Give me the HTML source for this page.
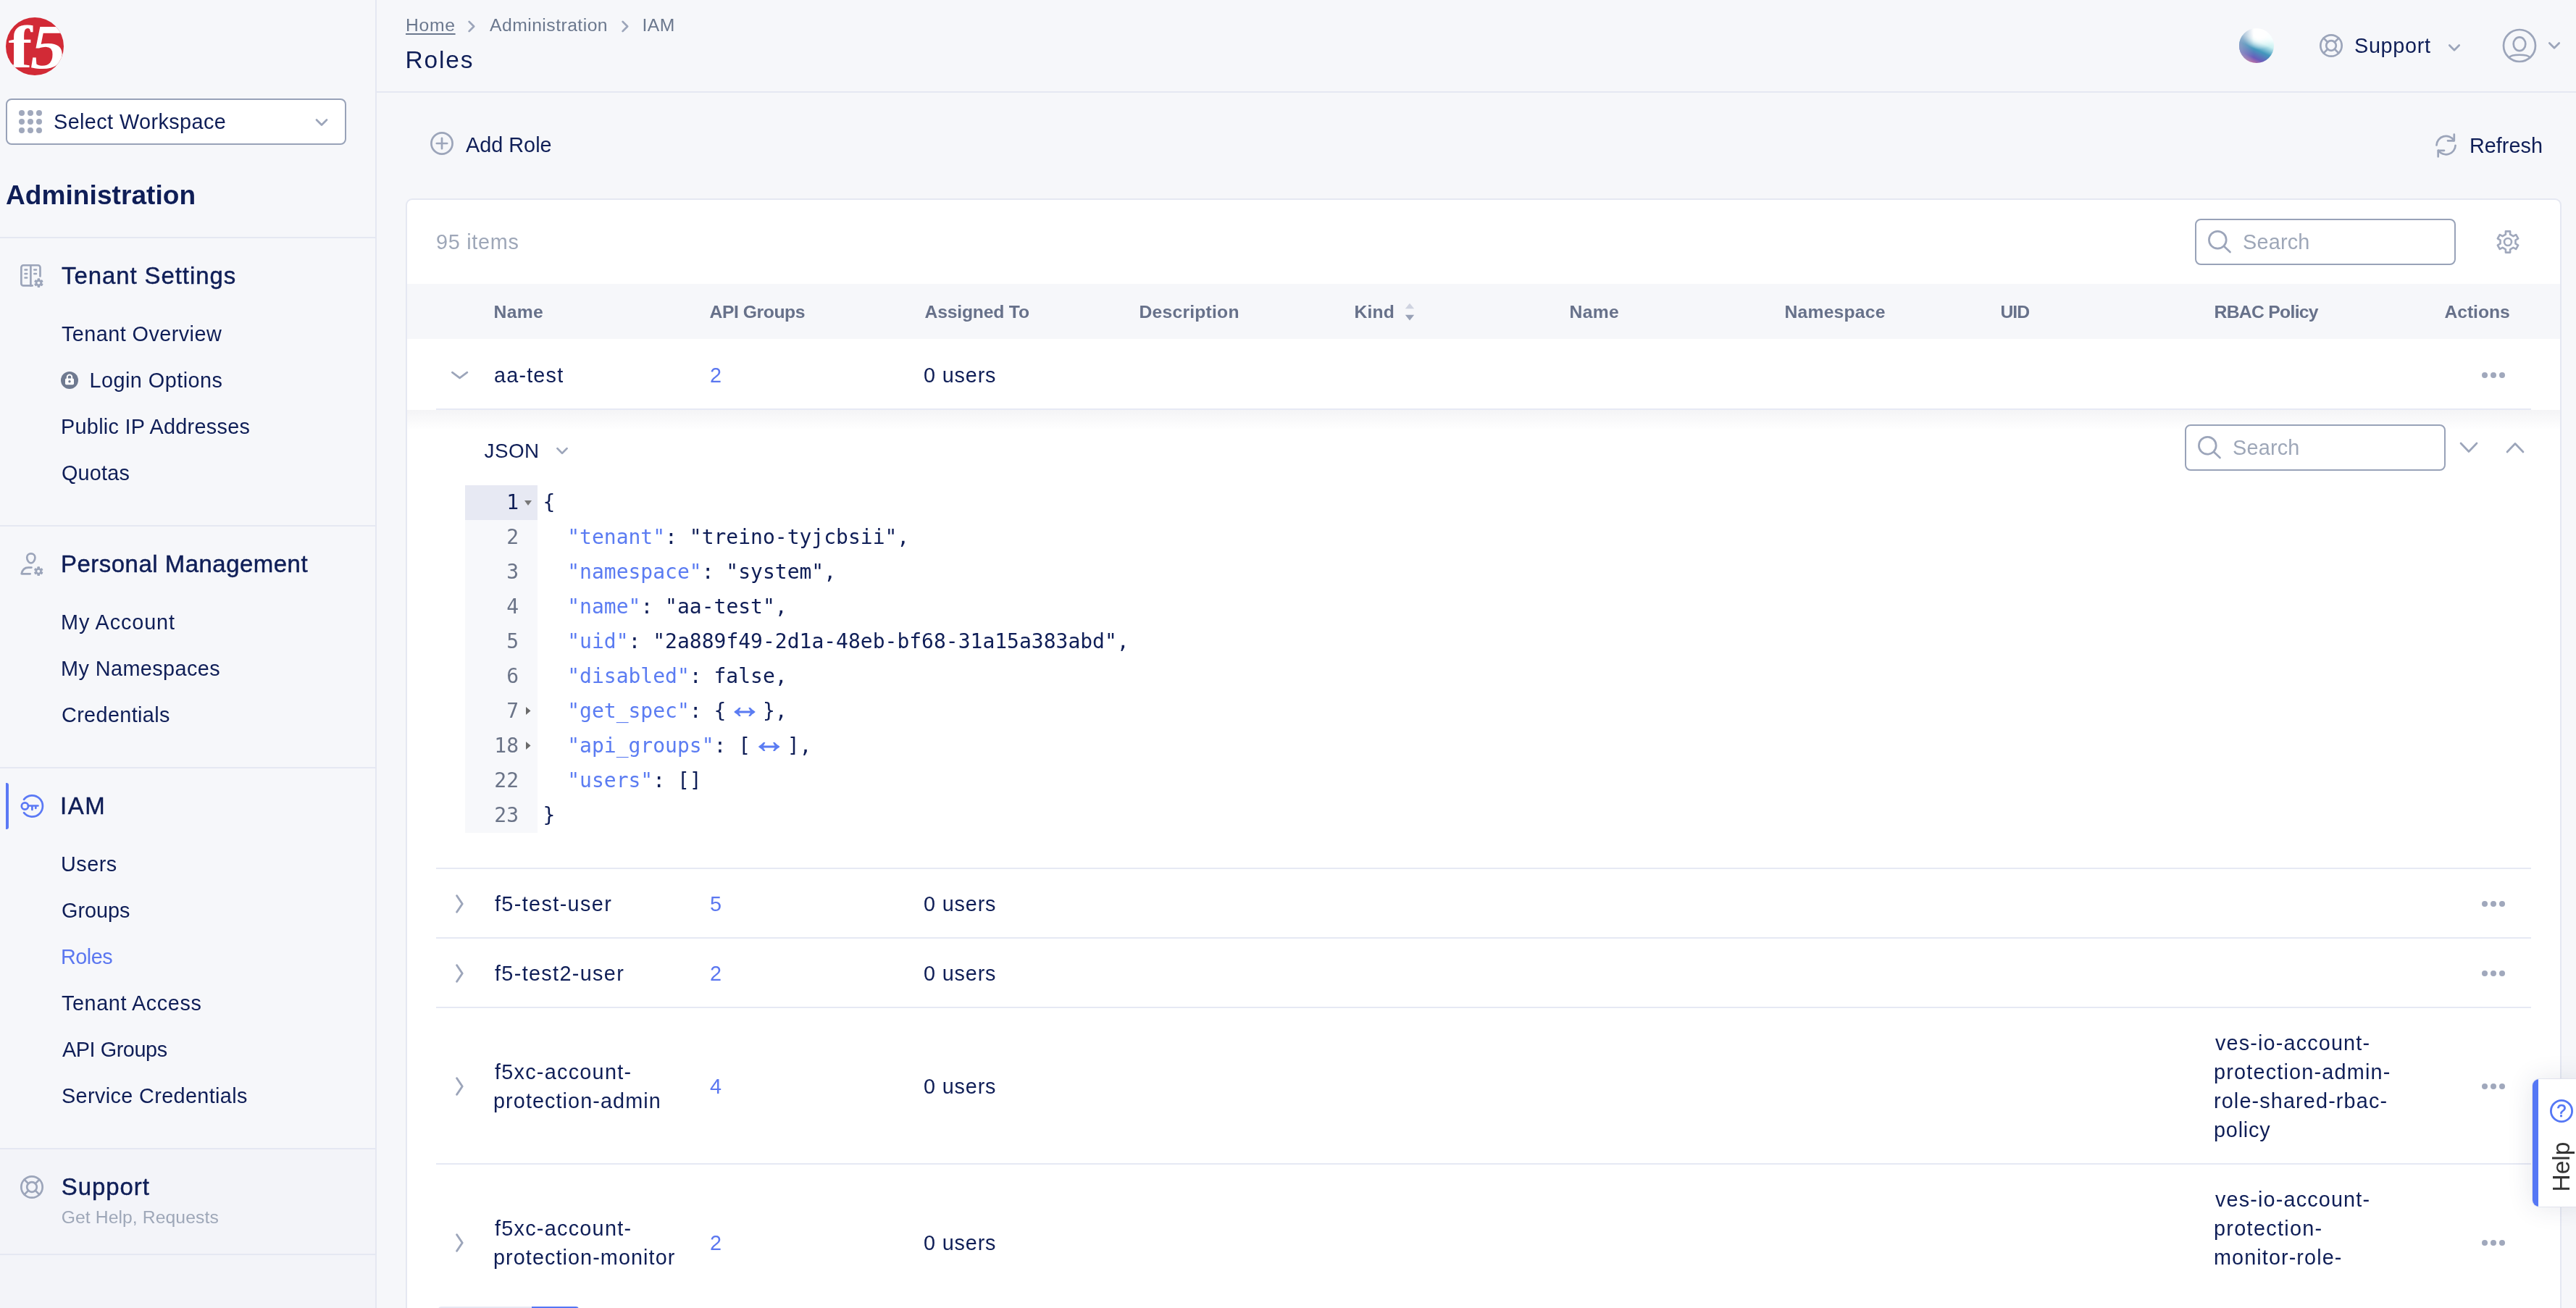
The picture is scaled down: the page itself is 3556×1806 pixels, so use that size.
<!DOCTYPE html>
<html lang="en">
<head>
<meta charset="utf-8">
<title>Roles - IAM - Administration</title>
<style>
*{box-sizing:border-box;margin:0;padding:0}
html,body{width:3556px;height:1806px;overflow:hidden;background:#f6f7fa}
body{position:relative;will-change:transform;font-family:"Liberation Sans",sans-serif;color:#0f1e57}
.abs{position:absolute}
.t{position:absolute;white-space:pre;line-height:40px}
.m{-webkit-text-stroke:0.45px currentColor}
.b{font-weight:700}
svg{position:absolute;overflow:visible}
.ic{fill:none;stroke:#9ca5ba;stroke-width:2.7;stroke-linecap:round;stroke-linejoin:round}
.hr{position:absolute;left:0;width:518px;height:2px;background:#e5e8f2}
#sidebar{position:absolute;left:0;top:0;width:520px;height:1806px;border-right:2px solid #e5e8f2;background:#f6f7fa}
#sbfoot{position:absolute;left:0;top:1585px;width:518px;height:221px;background:#f3f4f9}
#ws{position:absolute;left:8px;top:136px;width:470px;height:64px;border:2px solid #98a2b8;border-radius:8px;background:#fff}
#topbar{position:absolute;left:520px;top:0;width:3036px;height:128px;border-bottom:2px solid #e5e8f2}
#card{position:absolute;left:560px;top:274px;width:2976px;height:1600px;border:2px solid #e5e8f2;border-radius:9px;background:#fff}
#thead{position:absolute;left:562px;top:392px;width:2972px;height:76px;background:#f6f7fa}
.sep{position:absolute;left:602px;width:2892px;height:2px;background:#e6e9f4}
.search{position:absolute;width:360px;height:64px;border:2px solid #98a2b8;border-radius:8px;background:#fff}
.dots{position:absolute;left:3426px;width:32px;height:8px}
.dots i{position:absolute;top:0;width:8px;height:8px;border-radius:50%;background:#a0a8bc}
.dots i:nth-child(1){left:0}.dots i:nth-child(2){left:12px}.dots i:nth-child(3){left:24px}
#gutter{position:absolute;left:642px;top:670px;width:100px;height:480px;background:#f7f8fb}
#gutter .ln{height:48px;line-height:48px;text-align:right;padding-right:26px;font-family:"DejaVu Sans Mono","Liberation Mono",monospace;font-size:28px;color:#6b7488;position:relative}
#gutter .ln.act{background:#e7e9f3;color:#0f1e57}
#code{position:absolute;left:749.5px;top:670px;font-family:"DejaVu Sans Mono","Liberation Mono",monospace;font-size:28px;line-height:48px;white-space:pre;color:#0f1e57}
#code .k{color:#5b7cf2}
#code .fw{font-family:"Liberation Sans",sans-serif;font-size:47px;line-height:0;margin:0 1.79px;color:#5b7cf2;-webkit-text-stroke:0.9px #5b7cf2}
</style>
</head>
<body>

<!-- ============ SIDEBAR ============ -->
<nav id="sidebar">
  <svg id="logo" style="left:8px;top:24px" width="80" height="80" viewBox="0 0 80 80" role="img" aria-label="f5">
    <defs><clipPath id="lc"><circle cx="40" cy="40" r="40"/></clipPath></defs>
    <circle cx="40" cy="40" r="40" fill="#d22a36"/>
    <g clip-path="url(#lc)" font-family="Liberation Serif,serif" font-weight="700" fill="#fff"><text x="3.500" y="69" font-size="83" textLength="33" lengthAdjust="spacingAndGlyphs">f</text><text x="34" y="69.500" font-size="86" font-style="italic" textLength="49" lengthAdjust="spacingAndGlyphs">5</text></g>
  </svg>
  <div id="ws">
    <svg style="left:16px;top:14px" width="32" height="32" viewBox="0 0 32 32" fill="#a0a8bc">
      <circle cx="4" cy="4" r="4"/><circle cx="16" cy="4" r="4"/><circle cx="28" cy="4" r="4"/>
      <circle cx="4" cy="16" r="4"/><circle cx="16" cy="16" r="4"/><circle cx="28" cy="16" r="4"/>
      <circle cx="4" cy="28" r="4"/><circle cx="16" cy="28" r="4"/><circle cx="28" cy="28" r="4"/>
    </svg>
    <svg style="left:426px;top:26px" width="16" height="10" viewBox="0 0 16 10"><path class="ic" d="M1 1.5 L8 8.5 L15 1.5"/></svg>
  </div>
  <div class="hr" style="top:327px"></div>
  <div class="hr" style="top:725px"></div>
  <div class="hr" style="top:1059px"></div>
  <div id="sbfoot"></div>
  <div class="hr" style="top:1585px"></div>
  <div class="hr" style="top:1731px"></div>
  <div class="abs" style="left:8px;top:1081px;width:4px;height:64px;background:#5b79f5;border-radius:0 3px 3px 0"></div>

  <!-- tenant settings icon -->
  <svg style="left:26px;top:363px" width="36" height="36" viewBox="0 0 36 36">
    <path class="ic" d="M18.700 31.450 H6.350 a3 3 0 0 1 -3 -3 V6.250 a3 3 0 0 1 3 -3 H26.450 a3 3 0 0 1 3 3 V18.500"/>
    <path class="ic" d="M16.400 3.300 V31.400"/>
    <path class="ic" style="stroke-width:2.500" d="M8.500 9.500h2.700M8.500 15h2.700M8.500 20.500h2.700M21.300 9.500h2.700M21.300 15h2.700"/>
    <g transform="translate(27.400,27.600)"><g fill="#9ca5ba"><circle r="4.500"/><rect x="-1.800" y="-6.350" width="3.600" height="12.700" rx="0.900"/><rect x="-1.800" y="-6.350" width="3.600" height="12.700" rx="0.900" transform="rotate(60)"/><rect x="-1.800" y="-6.350" width="3.600" height="12.700" rx="0.900" transform="rotate(120)"/></g><circle r="1.950" fill="#f6f7fa"/></g>
  </svg>
  <!-- lock -->
  <svg style="left:84px;top:513px" width="24" height="24" viewBox="0 0 24 24">
    <circle cx="12" cy="12" r="12" fill="#6f7a90"/>
    <rect x="6" y="9.6" width="12" height="8.6" rx="1.6" fill="#fff"/>
    <path d="M8.8 10 V7.6 a3.2 3.2 0 0 1 6.4 0 V10" fill="none" stroke="#fff" stroke-width="2"/>
    <circle cx="12" cy="13.8" r="1.7" fill="#6f7a90"/>
  </svg>
  <!-- person gear -->
  <svg style="left:26px;top:760px" width="36" height="38" viewBox="0 0 36 38">
    <path class="ic" d="M16.8 4.3 c3.3 0 5.6 2.4 5.6 5.4 c0 3.6-2.6 7.7-5.6 7.7 s-5.6-4.1-5.6-7.7 c0-3 2.300-5.400 5.600-5.400z"/>
    <path class="ic" d="M17.500 23.600 h-4.500 c-5 0-8.300 3.600-9.300 8.700 h12"/>
    <g transform="translate(27.200,28.700)"><g fill="#9ca5ba"><circle r="4.500"/><rect x="-1.800" y="-6.350" width="3.600" height="12.700" rx="0.900"/><rect x="-1.800" y="-6.350" width="3.600" height="12.700" rx="0.900" transform="rotate(60)"/><rect x="-1.800" y="-6.350" width="3.600" height="12.700" rx="0.900" transform="rotate(120)"/></g><circle r="1.950" fill="#f6f7fa"/></g>
  </svg>
  <!-- key -->
  <svg style="left:26px;top:1095px" width="36" height="36" viewBox="0 0 36 36">
    <g fill="none" stroke="#5b79f5" stroke-width="2.700" stroke-linecap="round" stroke-linejoin="round">
      <path d="M7 8.800 A14.600 14.600 0 1 1 7 27.200"/>
      <circle cx="8.400" cy="18" r="4.600"/>
      <path d="M13 17.500 H26.500 M18.400 17.800 V23 M23.300 17.800 V21"/>
    </g>
  </svg>
  <!-- lifebuoy -->
  <svg style="left:26px;top:1621px" width="36" height="36" viewBox="0 0 36 36">
    <g class="ic"><circle cx="18" cy="18" r="14.700"/><circle cx="18" cy="18" r="6.800"/><path d="M7.600 7.600 L13.200 13.200 M28.400 7.600 L22.800 13.200 M7.600 28.400 L13.200 22.800 M28.400 28.400 L22.800 22.800"/></g>
  </svg>
  <span class="t" style="left:74px;top:148px;font-size:28.84px;color:#0f1e57;letter-spacing:0.4px">Select Workspace</span>
  <span class="t b" style="left:8px;top:249px;font-size:37.08px;color:#0f1e57;letter-spacing:0.04px">Administration</span>
  <span class="t m" style="left:85px;top:361px;font-size:32.96px;color:#0f1e57;letter-spacing:0.93px">Tenant Settings</span>
  <span class="t" style="left:85px;top:441px;font-size:28.84px;color:#0f1e57;letter-spacing:0.43px">Tenant Overview</span>
  <span class="t" style="left:123.5px;top:505px;font-size:28.84px;color:#0f1e57;letter-spacing:0.46px">Login Options</span>
  <span class="t" style="left:84px;top:569px;font-size:28.84px;color:#0f1e57;letter-spacing:0.28px">Public IP Addresses</span>
  <span class="t" style="left:85px;top:633px;font-size:28.84px;color:#0f1e57;letter-spacing:0.2px">Quotas</span>
  <span class="t m" style="left:84px;top:759px;font-size:32.96px;color:#0f1e57;letter-spacing:0.5px">Personal Management</span>
  <span class="t" style="left:84px;top:839px;font-size:28.84px;color:#0f1e57;letter-spacing:0.89px">My Account</span>
  <span class="t" style="left:84px;top:903px;font-size:28.84px;color:#0f1e57;letter-spacing:0.42px">My Namespaces</span>
  <span class="t" style="left:85px;top:967px;font-size:28.84px;color:#0f1e57;letter-spacing:0.35px">Credentials</span>
  <span class="t m" style="left:83px;top:1093px;font-size:32.96px;color:#0f1e57;letter-spacing:1.5px">IAM</span>
  <span class="t" style="left:84px;top:1173px;font-size:28.84px;color:#0f1e57;letter-spacing:0.5px">Users</span>
  <span class="t" style="left:85px;top:1237px;font-size:28.84px;color:#0f1e57">Groups</span>
  <span class="t" style="left:84px;top:1301px;font-size:28.84px;color:#5b77f0;letter-spacing:-0.5px">Roles</span>
  <span class="t" style="left:85px;top:1365px;font-size:28.84px;color:#0f1e57;letter-spacing:0.58px">Tenant Access</span>
  <span class="t" style="left:86px;top:1429px;font-size:28.84px;color:#0f1e57;letter-spacing:-0.44px">API Groups</span>
  <span class="t" style="left:85px;top:1493px;font-size:28.84px;color:#0f1e57;letter-spacing:0.36px">Service Credentials</span>
  <span class="t m" style="left:84.7px;top:1619px;font-size:32.96px;color:#0f1e57;letter-spacing:0.97px">Support</span>
  <span class="t" style="left:84.7px;top:1661px;font-size:24.72px;color:#9ea7b8;letter-spacing:0.08px">Get Help, Requests</span>
</nav>

<!-- ============ TOP BAR ============ -->
<header id="topbar"></header>
<svg style="left:646px;top:27.5px" width="10" height="17" viewBox="0 0 10 17"><path class="ic" d="M1.600 1.900 L8.200 8.500 L1.600 15.100"/></svg>
<svg style="left:858px;top:27.5px" width="10" height="17" viewBox="0 0 10 17"><path class="ic" d="M1.600 1.900 L8.200 8.500 L1.600 15.100"/></svg>
<div class="abs" id="orb" style="left:3091px;top:39px;width:48px;height:48px;border-radius:50%;background:radial-gradient(circle at 58% 10%,#fff 0,#fff 18%,rgba(255,255,255,0) 48%),linear-gradient(205deg,#f4ffff 24%,#c9f0f1 40%,#4398bd 58%,#6a5cba 76%,#e87a9c 93%)"></div>
<div class="abs" style="left:3091px;top:39px;width:48px;height:48px;border-radius:50%;background:linear-gradient(90deg,rgba(150,165,200,.8) 0,rgba(150,165,200,0) 42%)"></div>
<svg style="left:3199.500px;top:45px" width="36" height="36" viewBox="0 0 36 36">
  <g class="ic"><circle cx="18" cy="18" r="14.700"/><circle cx="18" cy="18" r="6.800"/><path d="M7.600 7.600 L13.200 13.200 M28.400 7.600 L22.800 13.200 M7.600 28.400 L13.200 22.800 M28.400 28.400 L22.800 22.800"/></g>
</svg>
<svg style="left:3380px;top:61px" width="16" height="10" viewBox="0 0 16 10"><path class="ic" d="M1.300 1.500 L8 8.300 L14.700 1.500"/></svg>
<svg style="left:3454px;top:39px" width="48" height="48" viewBox="0 0 48 48">
  <g class="ic"><circle cx="24" cy="24" r="22"/><ellipse cx="24" cy="21.700" rx="8.300" ry="9.400"/><path d="M9.500 40.500 C13 35.500 35 35.500 38.500 40.500"/></g>
</svg>
<svg style="left:3518px;top:58px" width="16" height="10" viewBox="0 0 16 10"><path class="ic" d="M1.300 1.500 L8 8.300 L14.700 1.500"/></svg>

<!-- ============ ACTION BAR ============ -->
<svg style="left:592px;top:180px" width="36" height="36" viewBox="0 0 36 36"><g class="ic"><circle cx="18" cy="18" r="14.600"/><path d="M10.800 18 H25.200 M18 10.800 V25.200"/></g></svg>
<svg style="left:3360px;top:183px" width="34" height="36" viewBox="0 0 34 36">
  <g class="ic"><path d="M3.500 17.500 A13 13 0 0 1 27.500 11"/><path d="M27.800 2.500 V11.300 H19"/><path d="M29.600 17.800 A13 13 0 0 1 6 24.800"/><path d="M5.700 33.300 V24.800 H14"/></g>
</svg>

<!-- ============ CARD ============ -->
<main id="card"></main>
<div id="thead"></div>
<div class="search" style="left:3030px;top:302px"></div>
<svg style="left:3046px;top:316px" width="36" height="36" viewBox="0 0 36 36"><g class="ic"><circle cx="15.300" cy="15.200" r="11.900"/><path d="M24 24 L32.500 32"/></g></svg>
<!-- gear -->
<svg style="left:3444px;top:316px" width="36" height="36" viewBox="0 0 36 36">
  <g fill="none" stroke="#a0a8bc" stroke-width="2.600" stroke-linejoin="round">
    <path d="M14.90 7.70 L14.90 3.40 L21.10 3.40 L21.10 7.70 L25.37 10.17 L29.09 8.02 L32.19 13.38 L28.47 15.53 L28.47 20.47 L32.19 22.62 L29.09 27.98 L25.37 25.83 L21.10 28.30 L21.10 32.60 L14.90 32.60 L14.90 28.30 L10.63 25.83 L6.91 27.98 L3.81 22.62 L7.53 20.47 L7.53 15.53 L3.81 13.38 L6.91 8.02 L10.63 10.17z"/>
    <circle cx="18" cy="18" r="5"/>
  </g>
</svg>
<!-- sort -->
<svg style="left:1937.750px;top:418px" width="16" height="26" viewBox="0 0 16 26"><path d="M8 0.700 L14.200 8.300 H1.800z" fill="#cfd3e0"/><path d="M8 24.600 L14.200 16.700 H1.800z" fill="#98a1b6"/></svg>

<!-- row 1 (expanded) -->
<svg style="left:622px;top:512px" width="26" height="14" viewBox="0 0 26 14"><path class="ic" d="M2.300 2.200 L12.600 9.800 L22.900 2.200"/></svg>
<div class="dots" style="top:514px"><i></i><i></i><i></i></div>
<div class="sep" style="top:564px"></div>
<div class="abs" style="left:562px;top:566px;width:2972px;height:28px;background:linear-gradient(#f4f4f6,#fff)"></div>

<!-- detail panel -->
<svg style="left:767px;top:616.500px" width="18" height="12" viewBox="0 0 18 12"><path class="ic" d="M2.400 2.100 L9 8.900 L15.600 2.100"/></svg>
<div class="search" style="left:3016px;top:586px"></div>
<svg style="left:3032px;top:600px" width="36" height="36" viewBox="0 0 36 36"><g class="ic"><circle cx="15.300" cy="15.200" r="11.900"/><path d="M24 24 L32.500 32"/></g></svg>
<svg style="left:3395px;top:610px" width="26" height="16" viewBox="0 0 26 16"><path class="ic" d="M2 2 L13 13.500 L24 2"/></svg>
<svg style="left:3459px;top:610px" width="26" height="16" viewBox="0 0 26 16"><path class="ic" d="M2 14 L13 2.500 L24 14"/></svg>

<div id="gutter">
  <div class="ln act">1</div><div class="ln">2</div><div class="ln">3</div><div class="ln">4</div><div class="ln">5</div><div class="ln">6</div><div class="ln">7</div><div class="ln">18</div><div class="ln">22</div><div class="ln">23</div>
</div>
<svg style="left:724px;top:691px" width="10" height="7" viewBox="0 0 10 7"><path d="M0 0 H10 L5 7z" fill="#777"/></svg>
<svg style="left:726px;top:975.5px" width="6.5" height="11" viewBox="0 0 6.5 11"><path d="M0 0 V11 L6.5 5.5z" fill="#6a6a6a"/></svg>
<svg style="left:726px;top:1023.5px" width="6.5" height="11" viewBox="0 0 6.5 11"><path d="M0 0 V11 L6.5 5.5z" fill="#6a6a6a"/></svg>
<pre id="code">{
  <span class="k">"tenant"</span>: "treino-tyjcbsii",
  <span class="k">"namespace"</span>: "system",
  <span class="k">"name"</span>: "aa-test",
  <span class="k">"uid"</span>: "2a889f49-2d1a-48eb-bf68-31a15a383abd",
  <span class="k">"disabled"</span>: false,
  <span class="k">"get_spec"</span>: {<span class="fw">↔</span>},
  <span class="k">"api_groups"</span>: [<span class="fw">↔</span>],
  <span class="k">"users"</span>: []
}</pre>

<!-- rows -->
<div class="sep" style="top:1198px"></div>
<div class="sep" style="top:1294px"></div>
<div class="sep" style="top:1390px"></div>
<div class="sep" style="top:1606px"></div>
<svg style="left:627.500px;top:1234.6px" width="14" height="26" viewBox="0 0 14 26"><path class="ic" style="stroke-width:2.900" d="M2.600 1.800 L10.200 13 L2.600 24.200"/></svg>
<svg style="left:627.500px;top:1330.6px" width="14" height="26" viewBox="0 0 14 26"><path class="ic" style="stroke-width:2.900" d="M2.600 1.800 L10.200 13 L2.600 24.200"/></svg>
<svg style="left:627.500px;top:1486.6px" width="14" height="26" viewBox="0 0 14 26"><path class="ic" style="stroke-width:2.900" d="M2.600 1.800 L10.200 13 L2.600 24.200"/></svg>
<svg style="left:627.500px;top:1702.6px" width="14" height="26" viewBox="0 0 14 26"><path class="ic" style="stroke-width:2.900" d="M2.600 1.800 L10.200 13 L2.600 24.200"/></svg>
<div class="dots" style="top:1244px"><i></i><i></i><i></i></div>
<div class="dots" style="top:1340px"><i></i><i></i><i></i></div>
<div class="dots" style="top:1496px"><i></i><i></i><i></i></div>
<div class="dots" style="top:1712px"><i></i><i></i><i></i></div>

<!-- h scrollbar -->
<div class="abs" style="left:605px;top:1804px;width:194px;height:8px;background:#e6e8f3;border-radius:4px;overflow:hidden"><div style="margin-left:129px;width:65px;height:8px;background:#5577f5"></div></div>

<a class="t" style="left:560px;top:15px;font-size:24.72px;color:#6b788e;letter-spacing:0.67px;text-decoration:underline;text-underline-offset:3px;text-decoration-thickness:2px">Home</a>
<span class="t" style="left:676px;top:15px;font-size:24.72px;color:#6b788e;letter-spacing:0.46px">Administration</span>
<span class="t" style="left:886.5px;top:15px;font-size:24.72px;color:#6b788e;letter-spacing:0.5px">IAM</span>
<span class="t" style="left:559.5px;top:63px;font-size:33.48px;color:#0f1e57;letter-spacing:1.88px">Roles</span>
<span class="t" style="left:643px;top:180px;font-size:28.84px;color:#0f1e57">Add Role</span>
<span class="t" style="left:3409px;top:181px;font-size:28.84px;color:#0f1e57">Refresh</span>
<span class="t" style="left:3250px;top:43px;font-size:28.84px;color:#0f1e57;letter-spacing:0.67px">Support</span>
<span class="t" style="left:602px;top:314px;font-size:28.84px;color:#9ea7b8;letter-spacing:0.71px">95 items</span>
<span class="t" style="left:3096px;top:314px;font-size:28.84px;color:#9ea7b8;letter-spacing:0.2px">Search</span>
<span class="t b" style="left:681.5px;top:411px;font-size:24.72px;color:#67718a;letter-spacing:0.33px">Name</span>
<span class="t b" style="left:979.5px;top:411px;font-size:24.72px;color:#67718a;letter-spacing:-0.44px">API Groups</span>
<span class="t b" style="left:1276.5px;top:411px;font-size:24.72px;color:#67718a;letter-spacing:-0.2px">Assigned To</span>
<span class="t b" style="left:1572.5px;top:411px;font-size:24.72px;color:#67718a;letter-spacing:0.2px">Description</span>
<span class="t b" style="left:1869.5px;top:411px;font-size:24.72px;color:#67718a;letter-spacing:0.17px">Kind</span>
<span class="t b" style="left:2166.5px;top:411px;font-size:24.72px;color:#67718a;letter-spacing:0.33px">Name</span>
<span class="t b" style="left:2463.5px;top:411px;font-size:24.72px;color:#67718a;letter-spacing:0.19px">Namespace</span>
<span class="t b" style="left:2761.5px;top:411px;font-size:24.72px;color:#67718a;letter-spacing:-1px">UID</span>
<span class="t b" style="left:3056.5px;top:411px;font-size:24.72px;color:#67718a;letter-spacing:-0.7px">RBAC Policy</span>
<span class="t b" style="left:3374.5px;top:411px;font-size:24.72px;color:#67718a;letter-spacing:-0.08px">Actions</span>
<span class="t" style="left:682px;top:498px;font-size:28.84px;color:#0f1e57;letter-spacing:1.17px">aa-test</span>
<span class="t" style="left:980px;top:498px;font-size:28.84px;color:#5b77f0">2</span>
<span class="t" style="left:1275px;top:498px;font-size:28.84px;color:#0f1e57;letter-spacing:0.83px">0 users</span>
<span class="t" style="left:668.5px;top:603px;font-size:27.81px;color:#0f1e57;letter-spacing:0.5px">JSON</span>
<span class="t" style="left:3082px;top:598px;font-size:28.84px;color:#9ea7b8;letter-spacing:0.2px">Search</span>
<span class="t" style="left:683px;top:1228px;font-size:28.84px;color:#0f1e57;letter-spacing:1.36px">f5-test-user</span>
<span class="t" style="left:980px;top:1228px;font-size:28.84px;color:#5b77f0">5</span>
<span class="t" style="left:1275px;top:1228px;font-size:28.84px;color:#0f1e57;letter-spacing:0.83px">0 users</span>
<span class="t" style="left:683px;top:1324px;font-size:28.84px;color:#0f1e57;letter-spacing:1.33px">f5-test2-user</span>
<span class="t" style="left:980px;top:1324px;font-size:28.84px;color:#5b77f0">2</span>
<span class="t" style="left:1275px;top:1324px;font-size:28.84px;color:#0f1e57;letter-spacing:0.83px">0 users</span>
<span class="t" style="left:683px;top:1460px;font-size:28.84px;color:#0f1e57;letter-spacing:1.25px">f5xc-account-</span>
<span class="t" style="left:681px;top:1500px;font-size:28.84px;color:#0f1e57;letter-spacing:1.07px">protection-admin</span>
<span class="t" style="left:980px;top:1480px;font-size:28.84px;color:#5b77f0">4</span>
<span class="t" style="left:1275px;top:1480px;font-size:28.84px;color:#0f1e57;letter-spacing:0.83px">0 users</span>
<span class="t" style="left:3058px;top:1420px;font-size:28.84px;color:#0f1e57;letter-spacing:1.14px">ves-io-account-</span>
<span class="t" style="left:3056px;top:1460px;font-size:28.84px;color:#0f1e57;letter-spacing:1.19px">protection-admin-</span>
<span class="t" style="left:3056px;top:1500px;font-size:28.84px;color:#0f1e57;letter-spacing:1.12px">role-shared-rbac-</span>
<span class="t" style="left:3056px;top:1540px;font-size:28.84px;color:#0f1e57;letter-spacing:0.8px">policy</span>
<span class="t" style="left:683px;top:1676px;font-size:28.84px;color:#0f1e57;letter-spacing:1.25px">f5xc-account-</span>
<span class="t" style="left:681px;top:1716px;font-size:28.84px;color:#0f1e57;letter-spacing:1.06px">protection-monitor</span>
<span class="t" style="left:980px;top:1696px;font-size:28.84px;color:#5b77f0">2</span>
<span class="t" style="left:1275px;top:1696px;font-size:28.84px;color:#0f1e57;letter-spacing:0.83px">0 users</span>
<span class="t" style="left:3058px;top:1636px;font-size:28.84px;color:#0f1e57;letter-spacing:1.14px">ves-io-account-</span>
<span class="t" style="left:3056px;top:1676px;font-size:28.84px;color:#0f1e57;letter-spacing:1.3px">protection-</span>
<span class="t" style="left:3056px;top:1716px;font-size:28.84px;color:#0f1e57;letter-spacing:1.08px">monitor-role-</span>

<!-- help tab -->
<div class="abs" id="help" style="left:3496px;top:1490px;width:80px;height:176px;background:#fff;border-radius:9px 0 0 9px;box-shadow:0 0 36px rgba(40,50,90,.12),0 0 0 1px #eceef6;overflow:hidden"><div style="width:8px;height:176px;background:#5577f5"></div></div>
<svg style="left:3518px;top:1516px" width="36" height="36" viewBox="0 0 36 36"><circle cx="18" cy="18" r="14.600" fill="none" stroke="#5577f5" stroke-width="2.800"/></svg>
<span class="t" style="left:3518px;top:1514px;width:36px;text-align:center;font-size:23px;color:#5577f5;-webkit-text-stroke:0.7px #5577f5">?</span>
<span class="abs" style="left:3501px;top:1593.500px;width:70px;height:34px;line-height:34px;font-size:33.500px;text-align:center;color:#333;transform:rotate(-90deg);transform-origin:50% 50%;white-space:pre">Help</span>
</body>
</html>
